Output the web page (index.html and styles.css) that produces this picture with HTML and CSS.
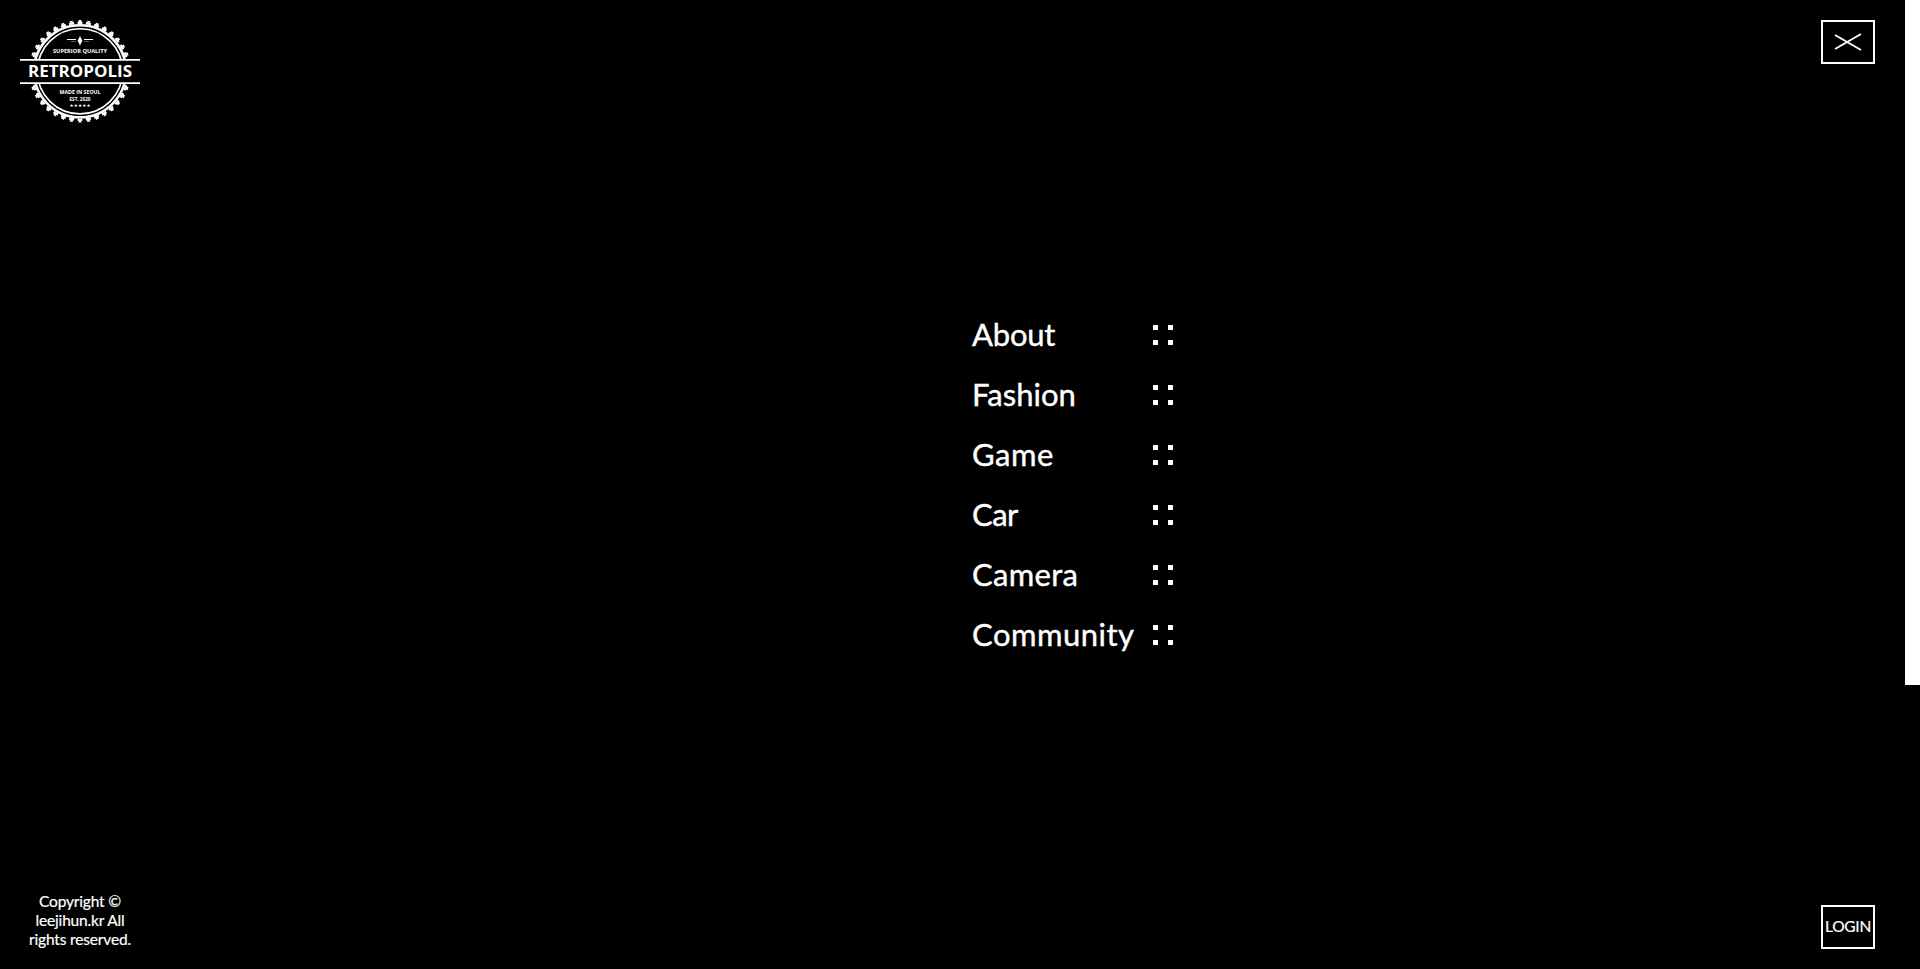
FILE: index.html
```html
<!DOCTYPE html>
<html lang="en">
<head>
<meta charset="utf-8">
<title>Retropolis</title>
<link rel="stylesheet" href="styles.css">
</head>
<body>
<div class="page">
  <aside class="side side-left">
    <a class="logo" aria-label="Retropolis">
      <svg width="120" height="103" viewBox="20 20 120 103">
        <circle class="teeth-base" cx="80" cy="71.3" r="48.4" pathLength="360"/>
        <circle class="teeth-tip" cx="80" cy="71.3" r="50.2" pathLength="360"/>
        <circle class="ring" cx="80" cy="71.3" r="46" stroke-width="2.6"/>
        <circle class="ring" cx="80" cy="71.3" r="42.6" stroke-width="1.6"/>
        <rect x="20" y="59" width="120" height="25" fill="#000"/>
        <path class="fill" d="M20 59h120v1.7H20zM20 82.2h120v1.7H20zM80 36l2.4 4.8L80 45.5l-2.4-4.7zM67 39h9v1h-9zM84 39h9v1h-9z"/>
        <path class="fill faint" d="M71 41h5v1h-5zM84 41h5v1h-5z"/>
        <text class="mark small" x="80" y="53" textLength="54" lengthAdjust="spacingAndGlyphs">SUPERIOR QUALITY</text>
        <text class="mark big" x="80" y="77" textLength="104" lengthAdjust="spacingAndGlyphs">RETROPOLIS</text>
        <text class="mark small" x="80" y="93.5" textLength="41" lengthAdjust="spacingAndGlyphs">MADE IN SEOUL</text>
        <text class="mark tiny" x="80" y="100.5" textLength="21" lengthAdjust="spacingAndGlyphs">EST. 2020</text>
        <text class="mark stars" x="80" y="106.8" textLength="21">★★★★★</text>
      </svg>
    </a>
    <p class="copyright">Copyright ©<br>leejihun.kr All<br>rights reserved.</p>
  </aside>
  <nav class="menu">
    <a class="item"><span class="label about">About</span><i class="dots"><b></b><b></b><b></b><b></b></i></a>
    <a class="item"><span class="label">Fashion</span><i class="dots"><b></b><b></b><b></b><b></b></i></a>
    <a class="item"><span class="label game">Game</span><i class="dots"><b></b><b></b><b></b><b></b></i></a>
    <a class="item"><span class="label car">Car</span><i class="dots"><b></b><b></b><b></b><b></b></i></a>
    <a class="item"><span class="label camera">Camera</span><i class="dots"><b></b><b></b><b></b><b></b></i></a>
    <a class="item"><span class="label community">Community</span><i class="dots"><b></b><b></b><b></b><b></b></i></a>
  </nav>
  <aside class="side side-right">
    <button class="box" aria-label="Close">
      <svg width="30" height="20" viewBox="0 0 30 20"><path d="M2 3l26 15M28 2L2 17" stroke="#fff" stroke-width="2"/></svg>
    </button>
    <button class="box login"><span>LOGIN</span></button>
  </aside>
  <div class="scrollbar"><div class="thumb"></div></div>
</div>
</body>
</html>
```
FILE: styles.css
```css
* { box-sizing: border-box; }
body {
  margin: 0;
  background: #000;
  color: #fff;
  font-family: Lato, "Open Sans", sans-serif;
}
.page { display: flex; height: 969px; overflow: hidden; }
.side { display: flex; flex-direction: column; justify-content: space-between; padding: 20px 0; }
.side-left { width: 160px; align-items: center; }
.side-right { width: 84px; }
.logo, .logo svg, .box svg { display: block; }
.teeth-base { fill: none; stroke: #fff; stroke-width: 2.4; stroke-dasharray: 6 4; stroke-dashoffset: 3; }
.teeth-tip { fill: none; stroke: #fff; stroke-width: 2; stroke-dasharray: 3.4 6.6; stroke-dashoffset: 1.7; }
.ring { fill: none; stroke: #fff; }
.fill { fill: #fff; }
.faint { opacity: .35; }
.mark { fill: #fff; font-family: "Open Sans", sans-serif; font-weight: 700; text-anchor: middle; }
.big { font-size: 15.6px; }
.small { font-size: 5.6px; }
.tiny { font-size: 4.6px; }
.stars { font-family: "DejaVu Sans", sans-serif; font-size: 4.6px; }
.copyright { margin: 0; font-size: 15.5px; line-height: 19px; letter-spacing: -.17px; text-align: center; white-space: nowrap; -webkit-text-stroke: .2px #fff; }
.menu { flex: 1; display: flex; flex-direction: column; padding: 305px 0 0 812px; }
.item { display: flex; width: 201px; height: 60px; align-items: center; justify-content: space-between; font-size: 31px; line-height: 60px; white-space: nowrap; }
.label { padding-bottom: 2px; line-height: 58px; -webkit-text-stroke: .4px #fff; }
.about { letter-spacing: -.2px; }
.game { letter-spacing: .5px; }
.car { letter-spacing: -.5px; }
.camera { letter-spacing: .3px; }
.community { letter-spacing: .5px; }
.dots { display: grid; grid-template-columns: 5px 5px; grid-auto-rows: 5px; gap: 10px; }
.dots b { background: #fff; }
.box { display: flex; width: 54px; height: 44px; padding: 0; align-items: center; justify-content: center; border: 2px solid #fff; background: #000; color: #fff; font: 15.5px Lato, sans-serif; }
.login { padding-bottom: 2px; letter-spacing: -.25px; -webkit-text-stroke: .2px #fff; }
.scrollbar { width: 15px; background: #000; }
.thumb { height: 685px; background: #fff; }
```
